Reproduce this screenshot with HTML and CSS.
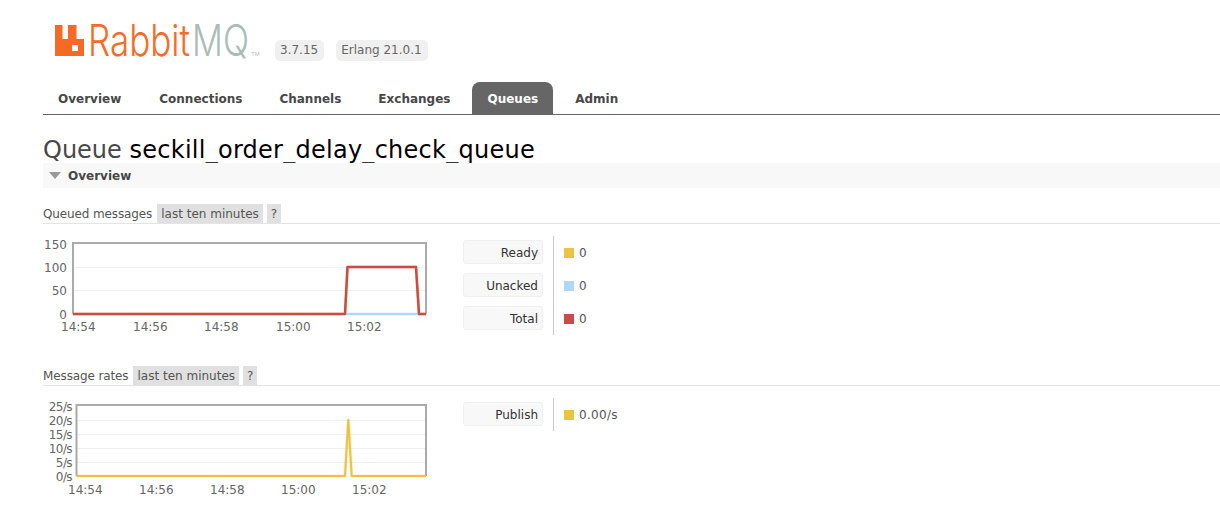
FILE: index.html
```html
<!DOCTYPE html>
<html lang="en">
<head>
<meta charset="utf-8">
<title>RabbitMQ Management</title>
<link rel="stylesheet" href="styles.css">
</head>
<body>
<header class="header">
  <div class="brand">
    <svg class="logo" width="205" height="42" viewBox="0 0 205 42">
      <path class="logo-mark" d="M0 5H7.500V19H13V5H21.500V19H29V36H0ZM17 25V31H23V25Z" fill-rule="evenodd"/>
      <text class="logo-rabbit" x="33" y="36" textLength="102" lengthAdjust="spacingAndGlyphs">Rabbit</text>
      <text class="logo-mq" x="137" y="36" textLength="57" lengthAdjust="spacingAndGlyphs">MQ</text>
      <text class="logo-tm" x="196" y="36">TM</text>
    </svg>
    <span class="version">3.7.15</span>
    <span class="version">Erlang 21.0.1</span>
  </div>
  <nav class="tabs">
    <a class="tab">Overview</a>
    <a class="tab">Connections</a>
    <a class="tab">Channels</a>
    <a class="tab">Exchanges</a>
    <a class="tab active">Queues</a>
    <a class="tab">Admin</a>
  </nav>
</header>
<main class="main">
  <h1 class="title">Queue <b class="title-name">seckill_order_delay_check_queue</b></h1>
  <h2 class="section-head"><span class="triangle"></span>Overview</h2>

  <div class="rate-head"><span class="rate-label">Queued messages</span><span class="chip">last ten minutes</span><span class="chip chip-help">?</span></div>
  <div class="chart-row">
    <svg class="chart" width="400" height="100" viewBox="0 0 400 100">
      <g class="grid">
        <path d="M30 36.500H383M30 59.500H383"/>
      </g>
      <path class="frame" d="M30 83V12H383V83"/>
      <path class="ln ln-halo" d="M30 83H302L304.500 36H373L376 83H383"/>
      <path class="ln ln-yellow" d="M30 83H302L304.500 36H373L376 83H383"/>
      <path class="ln ln-blue" d="M302 83H376"/>
      <path class="ln ln-red" d="M30 83H302L304.500 36H373L376 83H383"/>
      <g class="axis-y">
        <text x="24" y="18">150</text>
        <text x="24" y="41">100</text>
        <text x="24" y="64">50</text>
        <text x="24" y="88">0</text>
      </g>
      <g class="axis-x">
        <text x="18" y="100">14:54</text>
        <text x="90" y="100">14:56</text>
        <text x="161" y="100">14:58</text>
        <text x="233" y="100">15:00</text>
        <text x="304" y="100">15:02</text>
      </g>
    </svg>
    <div class="legend legend-3">
      <div class="legend-label">Ready</div>
      <div class="legend-label">Unacked</div>
      <div class="legend-label">Total</div>
    </div>
    <div class="legend-values">
      <div class="value-row"><i class="swatch yellow"></i>0</div>
      <div class="value-row"><i class="swatch blue"></i>0</div>
      <div class="value-row"><i class="swatch red"></i>0</div>
    </div>
  </div>

  <div class="rate-head rate-head-2"><span class="rate-label">Message rates</span><span class="chip">last ten minutes</span><span class="chip chip-help">?</span></div>
  <div class="chart-row chart-row-2">
    <svg class="chart" width="400" height="100" viewBox="0 0 400 100">
      <g class="grid">
        <path d="M33.500 16.500H383M33.500 30.500H383M33.500 44.500H383M33.500 58.500H383"/>
      </g>
      <path class="frame" d="M33.500 72V1H383V72"/>
      <path class="ln ln-halo" d="M33.500 72H302L305.300 16L308.700 72H383"/>
      <path class="ln ln-yellow" d="M33.500 72H302L305.300 16L308.700 72H383"/>
      <g class="axis-y axis-rate">
        <text x="29" y="7">25/s</text>
        <text x="29" y="21">20/s</text>
        <text x="29" y="35">15/s</text>
        <text x="29" y="49">10/s</text>
        <text x="29" y="63">5/s</text>
        <text x="29" y="77">0/s</text>
      </g>
      <g class="axis-x">
        <text x="25" y="90">14:54</text>
        <text x="96" y="90">14:56</text>
        <text x="167" y="90">14:58</text>
        <text x="238" y="90">15:00</text>
        <text x="309" y="90">15:02</text>
      </g>
    </svg>
    <div class="legend legend-1">
      <div class="legend-label">Publish</div>
    </div>
    <div class="legend-values legend-values-2">
      <div class="value-row"><i class="swatch yellow"></i>0.00/s</div>
    </div>
  </div>
</main>
</body>
</html>
```
FILE: styles.css
```css
html, body { margin: 0; padding: 0; }
body {
  width: 1220px;
  height: 516px;
  overflow: hidden;
  background: #fff;
  font-family: Verdana, "DejaVu Sans", sans-serif;
  font-size: 12px;
  color: #484848;
}
.header { padding: 0 0 0 43px; }
.brand { display: flex; align-items: flex-start; height: 82px; }
.logo { margin: 20px 0 0 12px; flex: none; overflow: visible; }
.logo-mark { fill: #f66a25; }
.logo-rabbit { fill: #f76b26; font: 300 44px "Inter", sans-serif; }
.logo-mq { fill: #abbbb5; font: 300 44px "Inter", sans-serif; }
.logo-tm { fill: #bbb; font: 6px "Liberation Sans", sans-serif; }
.version {
  margin-top: 40px;
  height: 21px;
  line-height: 21px;
  padding: 0 6px 0 5px;
  border-radius: 5px;
  background: #f0f0f0;
  color: #666;
  font-size: 12px;
}
.brand .version:nth-of-type(1) { margin-left: 15px; }
.brand .version:nth-of-type(2) { margin-left: 12px; }
.tabs { display: flex; height: 32px; border-bottom: 1px solid #666; }
.tab {
  padding: 0 15px;
  margin-right: 7px;
  line-height: 34px;
  font-weight: bold;
  font-size: 12px;
  color: #484848;
  border-radius: 8px 8px 0 0;
}
.tab:first-child { margin-right: 8px; }
.tab.active { background: #666; color: #fff; }
.main { padding-left: 43px; }
.title {
  margin: 20px 0 -2px;
  font-size: 24px;
  line-height: 30px;
  font-weight: normal;
  color: #484848;
}
.title-name { font-weight: normal; color: #000; letter-spacing: .26px; }
.section-head {
  display: flex;
  align-items: center;
  position: relative;
  height: 25px;
  margin: 0;
  font-size: 12px;
  font-weight: bold;
  color: #484848;
  background: #f8f8f8;
}
.triangle {
  width: 0; height: 0;
  margin: 0 7px 0 6px;
  border-left: 6px solid transparent;
  border-right: 6px solid transparent;
  border-top: 7px solid #999;
}
.rate-head {
  display: flex;
  margin-top: 16px;
  height: 19px;
  line-height: 21px;
  border-bottom: 1px solid #e4e4e4;
  color: #555;
}
.rate-head-2 { margin-top: 0; }
.rate-label { letter-spacing: -.12px; }
.chip { height: 19px; margin-left: 5px; padding: 0 4px; background: #e0e0e0; color: #555; line-height: 21px; }
.chip-help { margin-left: 4px; padding: 0 4px; }
.chart-row { display: flex; height: 142px; align-items: flex-start; }
.chart-row-2 { height: 100px; }
.chart { flex: none; margin: 7px 20px 0 0; overflow: visible; }
.chart-row-2 .chart { margin-top: 18px; }
.grid path { fill: none; stroke: #efefef; stroke-width: 1; }
.frame { fill: none; stroke: #aaa; stroke-width: 2; }
.ln { fill: none; stroke-width: 2; stroke-linejoin: round; }
.ln-halo { stroke: #edc240; stroke-width: 3.500; opacity: .25; }
.ln-yellow { stroke: #edc240; }
.ln-blue { stroke: #afd8f8; stroke-width: 2.500; }
.ln-red { stroke: #cb4b4b; stroke-width: 2.500; }
.axis-y text { text-anchor: end; font-size: 12px; fill: #666; }
.axis-rate text { letter-spacing: -.6px; }
.axis-x text { font-size: 12px; fill: #666; }
.legend {
  display: flex;
  flex-direction: column;
  gap: 9px;
  margin-top: 12px;
  padding-top: 4px;
  width: 90px;
  border-right: 1px solid #ccc;
}
.legend-3 { height: 95px; }
.legend-1 { height: 29px; }
.legend-label {
  box-sizing: border-box;
  width: 80px;
  height: 24px;
  line-height: 25px;
  padding-right: 4px;
  text-align: right;
  background: #f8f8f8;
  border: 1px solid #f0f0f0;
  border-radius: 3px;
  color: #333;
}
.legend-values { display: flex; flex-direction: column; gap: 9px; padding-top: 16px; margin-left: 10px; }
.legend-values-2 { letter-spacing: .3px; }
.value-row { box-sizing: border-box; height: 24px; padding-top: 2px; display: flex; align-items: center; color: #555; }
.swatch { width: 10px; height: 10px; margin-right: 5px; }
.swatch.yellow { background: #edc240; }
.swatch.blue { background: #afd8f8; }
.swatch.red { background: #cb4b4b; }
```
